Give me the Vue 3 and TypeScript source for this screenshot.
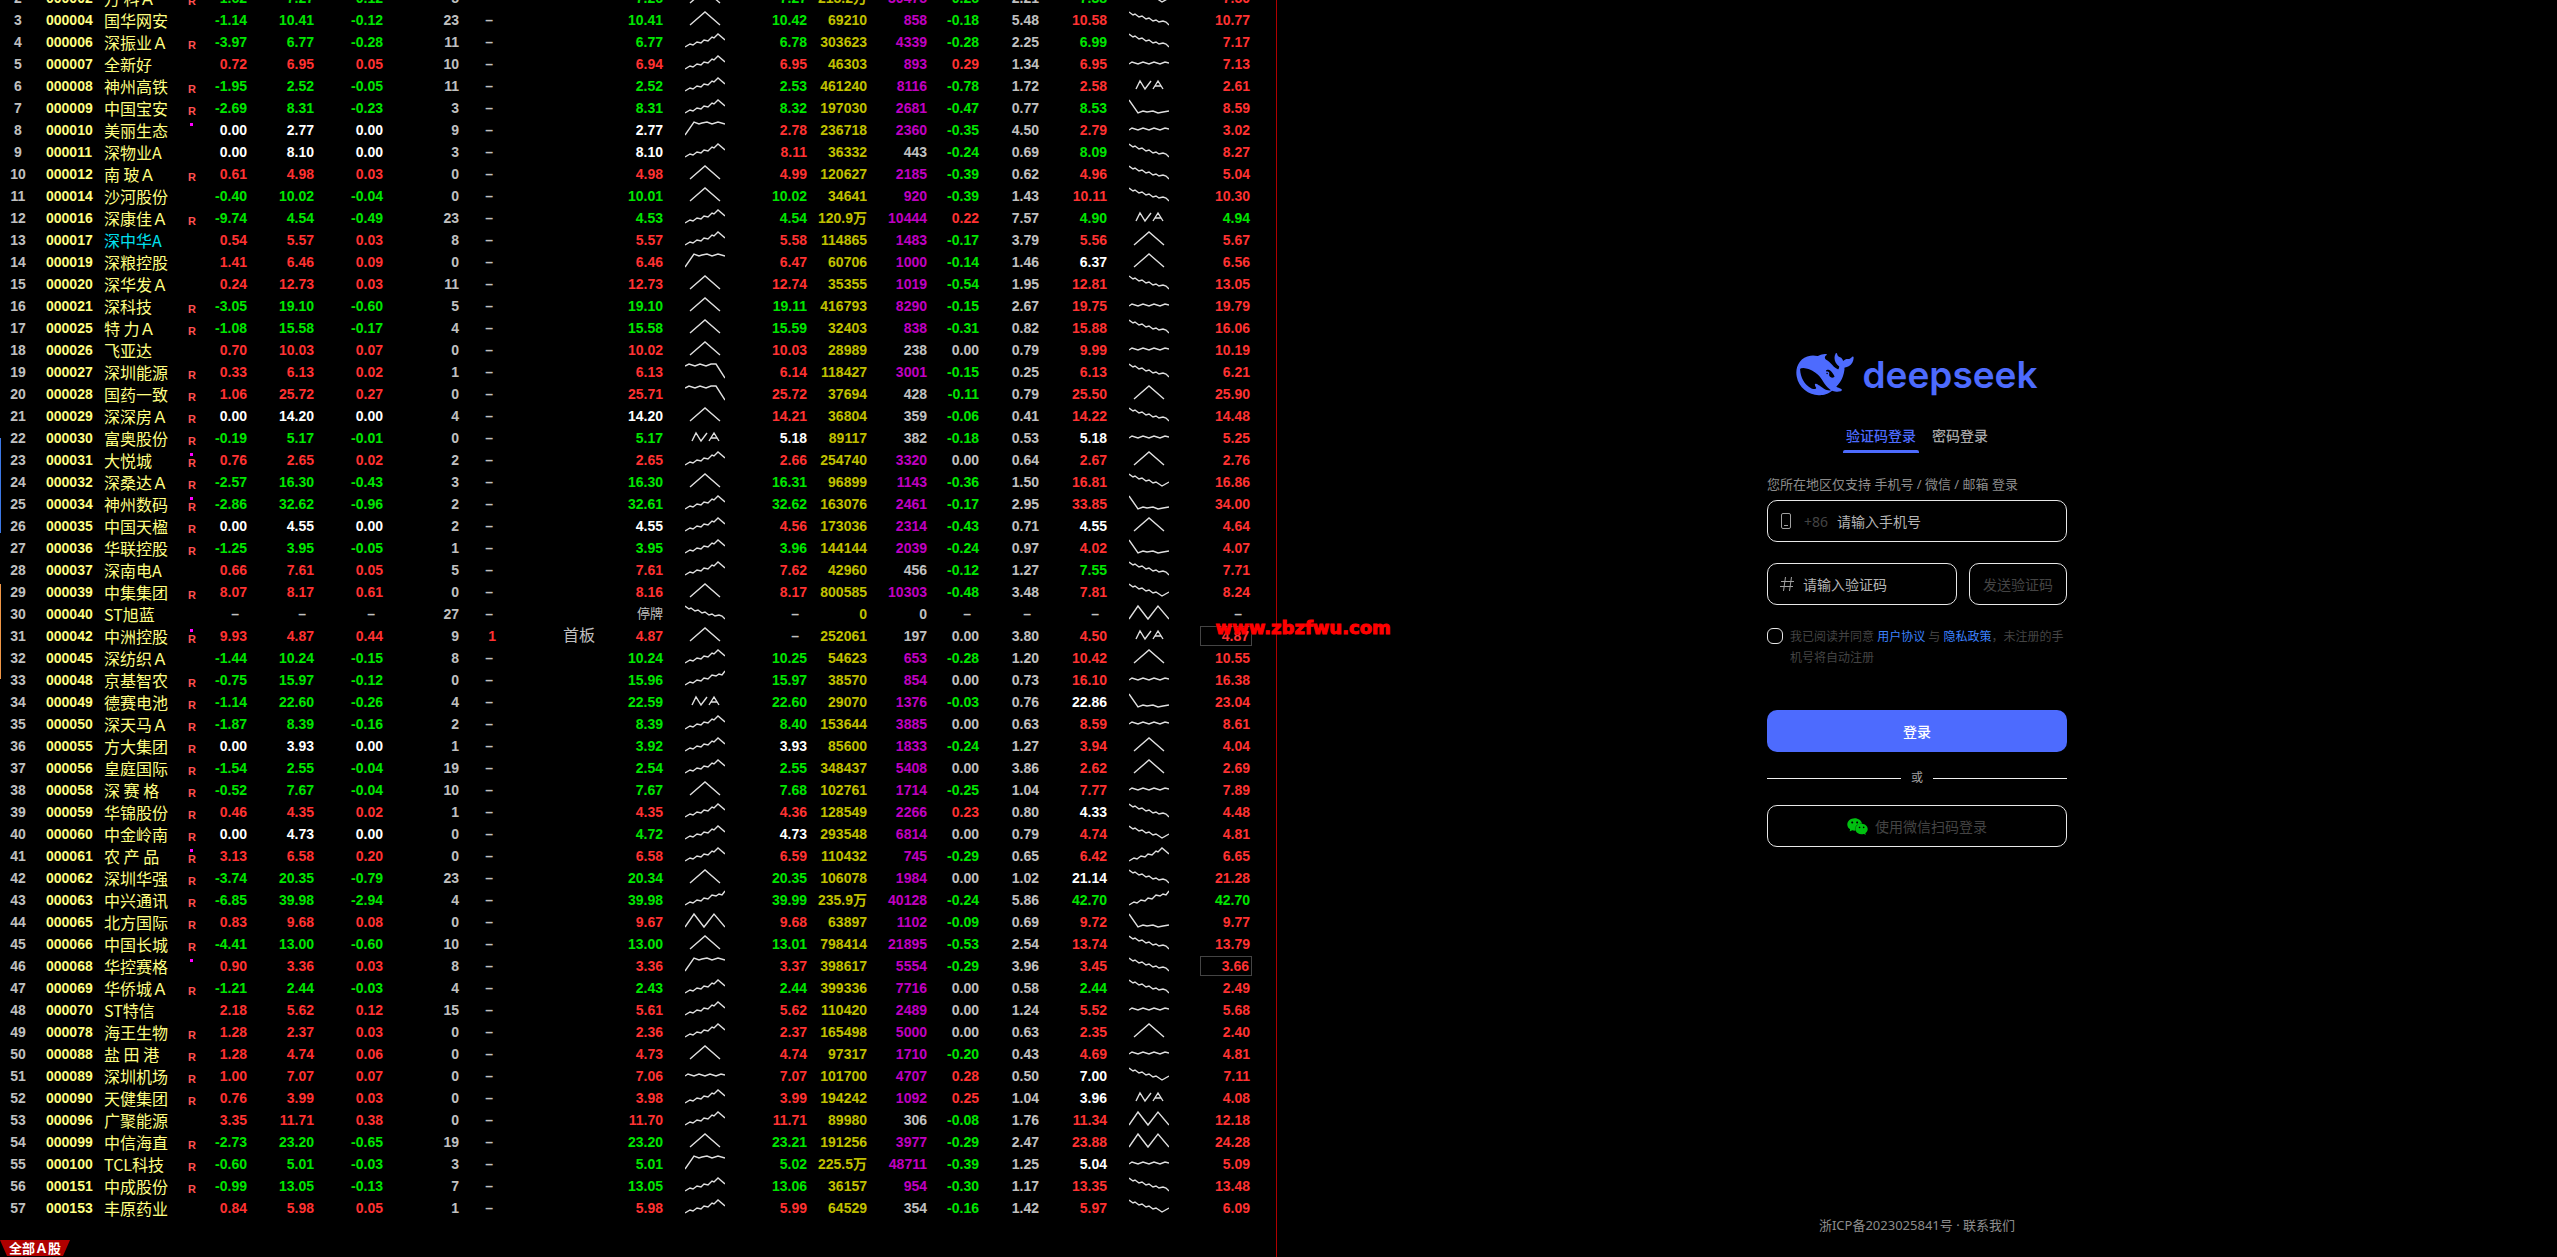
<script setup lang="ts">
import { ref } from 'vue'

type Tone = 'up' | 'down' | 'even' | 'none'

interface Quote {
  rank: number
  code: string
  name: string
  financing: boolean
  notice: boolean
  percent: string
  price: string
  change: string
  count: string
  bid: string
  bidLine: string
  ask: string
  volume: string
  lot: string
  speed: string
  turnover: string
  open: string
  openLine: string
  high: string
}

const DASH = '–'

// Outlines of the small trend drawings, on a 40 x 22 canvas
const LINES: Record<string, string> = {
  P: 'M5 16L20 3L35 16',
  U: 'M0 16L5 13L8 14L12 11L16 12L19 9L23 10L27 6L29 7L33 3L40 9',
  A: 'M0 16L5 13L8 14L12 11L16 12L19 9L23 10L27 6L31 7L34 5L37 6L40 2',
  L: 'M0 3L4 6L6 5L10 8L13 7L17 10L20 9L24 12L27 11L30 13L34 12L37 13L40 16',
  F: 'M0 11L3 9L9 11L14 9L20 11L25 9L31 11L36 9L40 10',
  N: 'M7 14L11 6L16 14L22 6M24 14L29 6L34 14M26 11H32',
  V: 'M0 3L9 16L14 14L18 15L24 14L29 16L34 15L40 14',
  J: 'M0 16L9 3L14 5L17 4L22 3L27 5L33 3L40 5',
  Q: 'M0 5L4 3L10 5L15 3L21 5L26 3L31 3L40 17',
  B: 'M0 3L4 6L6 5L10 8L13 7L17 10L20 9L24 12L27 11L33 15L40 11',
  W: 'M0 16L9 3L19 16L29 3L40 16',
}

const SOURCE = `
002|万 科Ａ|R|-1.62|7.27|-0.12|5|7.26|P|7.27|215.2万|30475|-0.26|2.21|7.38|B|7.50
004|国华网安||-1.14|10.41|-0.12|23|10.41|P|10.42|69210|858|-0.18|5.48|10.58|L|10.77
006|深振业Ａ|R|-3.97|6.77|-0.28|11|6.77|U|6.78|303623|4339|-0.28|2.25|6.99|L|7.17
007|全新好||0.72|6.95|0.05|10|6.94|U|6.95|46303|893|0.29|1.34|6.95|F|7.13
008|神州高铁|R|-1.95|2.52|-0.05|11|2.52|U|2.53|461240|8116|-0.78|1.72|2.58|N|2.61
009|中国宝安|R|-2.69|8.31|-0.23|3|8.31|U|8.32|197030|2681|-0.47|0.77|8.53|V|8.59
010|美丽生态|*|0.00|2.77|0.00|9|2.77|J|2.78|236718|2360|-0.35|4.50|2.79|F|3.02
011|深物业A||0.00|8.10|0.00|3|8.10|U|8.11|36332|443|-0.24|0.69|8.09|L|8.27
012|南 玻Ａ|R|0.61|4.98|0.03|0|4.98|P|4.99|120627|2185|-0.39|0.62|4.96|L|5.04
014|沙河股份||-0.40|10.02|-0.04|0|10.01|P|10.02|34641|920|-0.39|1.43|10.11|L|10.30
016|深康佳Ａ|R|-9.74|4.54|-0.49|23|4.53|U|4.54|120.9万|10444|0.22|7.57|4.90|N|4.94
017|深中华A||0.54|5.57|0.03|8|5.57|U|5.58|114865|1483|-0.17|3.79|5.56|P|5.67
019|深粮控股||1.41|6.46|0.09|0|6.46|J|6.47|60706|1000|-0.14|1.46|6.37|P|6.56
020|深华发Ａ||0.24|12.73|0.03|11|12.73|P|12.74|35355|1019|-0.54|1.95|12.81|L|13.05
021|深科技|R|-3.05|19.10|-0.60|5|19.10|P|19.11|416793|8290|-0.15|2.67|19.75|F|19.79
025|特 力Ａ|R|-1.08|15.58|-0.17|4|15.58|P|15.59|32403|838|-0.31|0.82|15.88|L|16.06
026|飞亚达||0.70|10.03|0.07|0|10.02|P|10.03|28989|238|0.00|0.79|9.99|F|10.19
027|深圳能源|R|0.33|6.13|0.02|1|6.13|Q|6.14|118427|3001|-0.15|0.25|6.13|L|6.21
028|国药一致|R|1.06|25.72|0.27|0|25.71|Q|25.72|37694|428|-0.11|0.79|25.50|P|25.90
029|深深房Ａ|R|0.00|14.20|0.00|4|14.20|P|14.21|36804|359|-0.06|0.41|14.22|L|14.48
030|富奥股份|R|-0.19|5.17|-0.01|0|5.17|N|5.18|89117|382|-0.18|0.53|5.18|F|5.25
031|大悦城|R*|0.76|2.65|0.02|2|2.65|U|2.66|254740|3320|0.00|0.64|2.67|P|2.76
032|深桑达Ａ|R|-2.57|16.30|-0.43|3|16.30|P|16.31|96899|1143|-0.36|1.50|16.81|B|16.86
034|神州数码|R*|-2.86|32.62|-0.96|2|32.61|U|32.62|163076|2461|-0.17|2.95|33.85|V|34.00
035|中国天楹|R|0.00|4.55|0.00|2|4.55|U|4.56|173036|2314|-0.43|0.71|4.55|P|4.64
036|华联控股|R|-1.25|3.95|-0.05|1|3.95|U|3.96|144144|2039|-0.24|0.97|4.02|V|4.07
037|深南电A||0.66|7.61|0.05|5|7.61|U|7.62|42960|456|-0.12|1.27|7.55|L|7.71
039|中集集团|R|8.07|8.17|0.61|0|8.16|P|8.17|800585|10303|-0.48|3.48|7.81|B|8.24
040|ST旭蓝||–|–|–|27|停牌|L|–|0|0|–|–|–|W|–
042|中洲控股|R*|9.93|4.87|0.44|9|4.87|P|–|252061|197|0.00|3.80|4.50|N|4.87
045|深纺织Ａ||-1.44|10.24|-0.15|8|10.24|U|10.25|54623|653|-0.28|1.20|10.42|P|10.55
048|京基智农|R|-0.75|15.97|-0.12|0|15.96|A|15.97|38570|854|0.00|0.73|16.10|F|16.38
049|德赛电池|R|-1.14|22.60|-0.26|4|22.59|N|22.60|29070|1376|-0.03|0.76|22.86|V|23.04
050|深天马Ａ|R|-1.87|8.39|-0.16|2|8.39|U|8.40|153644|3885|0.00|0.63|8.59|F|8.61
055|方大集团|R|0.00|3.93|0.00|1|3.92|U|3.93|85600|1833|-0.24|1.27|3.94|P|4.04
056|皇庭国际|R|-1.54|2.55|-0.04|19|2.54|U|2.55|348437|5408|0.00|3.86|2.62|P|2.69
058|深 赛 格|R|-0.52|7.67|-0.04|10|7.67|P|7.68|102761|1714|-0.25|1.04|7.77|F|7.89
059|华锦股份|R|0.46|4.35|0.02|1|4.35|U|4.36|128549|2266|0.23|0.80|4.33|L|4.48
060|中金岭南|R|0.00|4.73|0.00|0|4.72|U|4.73|293548|6814|0.00|0.79|4.74|B|4.81
061|农 产 品|R*|3.13|6.58|0.20|0|6.58|U|6.59|110432|745|-0.29|0.65|6.42|U|6.65
062|深圳华强|R|-3.74|20.35|-0.79|23|20.34|P|20.35|106078|1984|0.00|1.02|21.14|L|21.28
063|中兴通讯|R|-6.85|39.98|-2.94|4|39.98|A|39.99|235.9万|40128|-0.24|5.86|42.70|A|42.70
065|北方国际|R|0.83|9.68|0.08|0|9.67|W|9.68|63897|1102|-0.09|0.69|9.72|V|9.77
066|中国长城|R|-4.41|13.00|-0.60|10|13.00|P|13.01|798414|21895|-0.53|2.54|13.74|L|13.79
068|华控赛格|*|0.90|3.36|0.03|8|3.36|J|3.37|398617|5554|-0.29|3.96|3.45|L|3.66
069|华侨城Ａ|R|-1.21|2.44|-0.03|4|2.43|U|2.44|399336|7716|0.00|0.58|2.44|L|2.49
070|ST特信||2.18|5.62|0.12|15|5.61|U|5.62|110420|2489|0.00|1.24|5.52|F|5.68
078|海王生物|R|1.28|2.37|0.03|0|2.36|U|2.37|165498|5000|0.00|0.63|2.35|P|2.40
088|盐 田 港|R|1.28|4.74|0.06|0|4.73|P|4.74|97317|1710|-0.20|0.43|4.69|F|4.81
089|深圳机场|R|1.00|7.07|0.07|0|7.06|F|7.07|101700|4707|0.28|0.50|7.00|B|7.11
090|天健集团|R|0.76|3.99|0.03|0|3.98|U|3.99|194242|1092|0.25|1.04|3.96|N|4.08
096|广聚能源||3.35|11.71|0.38|0|11.70|U|11.71|89980|306|-0.08|1.76|11.34|W|12.18
099|中信海直|R|-2.73|23.20|-0.65|19|23.20|P|23.21|191256|3977|-0.29|2.47|23.88|W|24.28
100|TCL科技|R|-0.60|5.01|-0.03|3|5.01|J|5.02|225.5万|48711|-0.39|1.25|5.04|F|5.09
151|中成股份|R|-0.99|13.05|-0.13|7|13.05|U|13.06|36157|954|-0.30|1.17|13.35|L|13.48
153|丰原药业||0.84|5.98|0.05|1|5.98|U|5.99|64529|354|-0.16|1.42|5.97|B|6.09
`

const quotes: Quote[] = SOURCE.trim()
  .split('\n')
  .map((line, index) => {
    const f = line.split('|')
    return {
      rank: index + 2,
      code: '000' + f[0],
      name: f[1],
      financing: f[2].includes('R'),
      notice: f[2].includes('*'),
      percent: f[3],
      price: f[4],
      change: f[5],
      count: f[6],
      bid: f[7],
      bidLine: f[8],
      ask: f[9],
      volume: f[10],
      lot: f[11],
      speed: f[12],
      turnover: f[13],
      open: f[14],
      openLine: f[15],
      high: f[16],
    }
  })

const streaks: Record<string, { days: string; label: string }> = {
  '000042': { days: '1', label: '首板' },
}
const boxed = new Set(['000042', '000068'])
const watched = new Set(['000017'])

function sign(value: number): Tone {
  if (Number.isNaN(value)) return 'none'
  if (value === 0) return 'even'
  return value > 0 ? 'up' : 'down'
}

// A price is coloured by where it stands against the previous close
function tone(q: Quote, value: string): Tone {
  const cents = Math.round(Number(value) * 100)
  const close = Math.round(Number(q.price) * 100) - Math.round(Number(q.change) * 100)
  return sign(cents - close)
}

function speedTone(q: Quote): Tone {
  const t = sign(Number(q.speed))
  return t === 'even' ? 'none' : t
}

const columns = [36, 68, 84, 12, 47, 67, 69, 76, 37, 99, 68, 62, 82, 60, 60, 52, 60, 68, 62, 83, 24]

const phone = ref('')
const code = ref('')
const agreed = ref(false)
</script>

<template>
  <div class="desk">
    <section class="market">
      <i class="edge edge-blue"></i>
      <i class="edge edge-orange"></i>
      <div class="board">
        <table class="quotes">
          <colgroup>
            <col v-for="(w, i) in columns" :key="i" :style="{ width: w + 'px' }" />
          </colgroup>
          <tbody>
            <tr v-for="q in quotes" :key="q.code">
              <td class="rank">{{ q.rank }}</td>
              <td class="code">{{ q.code }}</td>
              <td class="name" :class="{ watched: watched.has(q.code) }">{{ q.name }}</td>
              <td class="marks"><i v-if="q.notice" class="notice"></i><span v-if="q.financing">R</span></td>
              <td :class="[sign(Number(q.percent)), { dash: q.percent === DASH }]">{{ q.percent }}</td>
              <td :class="[sign(Number(q.change)), { dash: q.price === DASH }]">{{ q.price }}</td>
              <td :class="[sign(Number(q.change)), { dash: q.change === DASH }]">{{ q.change }}</td>
              <td>{{ q.count }}</td>
              <td v-if="streaks[q.code]" class="up">{{ streaks[q.code].days }}</td>
              <td v-else class="streak">{{ DASH }}</td>
              <td class="label">{{ streaks[q.code]?.label }}</td>
              <td :class="[tone(q, q.bid), { halted: q.bid === '停牌' }]">{{ q.bid }}</td>
              <td class="line"><svg width="40" height="22" viewBox="0 0 40 22"><path :d="LINES[q.bidLine]" /></svg></td>
              <td :class="[tone(q, q.ask), { dash: q.ask === DASH }]">{{ q.ask }}</td>
              <td class="volume">{{ q.volume }}</td>
              <td :class="{ large: Number(q.lot) >= 500 }">{{ q.lot }}</td>
              <td :class="[speedTone(q), { dash: q.speed === DASH }]">{{ q.speed }}</td>
              <td :class="{ dash: q.turnover === DASH }">{{ q.turnover }}</td>
              <td :class="[tone(q, q.open), { dash: q.open === DASH }]">{{ q.open }}</td>
              <td class="line"><svg width="40" height="22" viewBox="0 0 40 22"><path :d="LINES[q.openLine]" /></svg></td>
              <td class="high" :class="[tone(q, q.high), { dash: q.high === DASH }]">
                <span :class="{ boxed: boxed.has(q.code) }">{{ q.high }}</span>
              </td>
              <td></td>
            </tr>
          </tbody>
        </table>
      </div>
      <button type="button" class="sheet">全部Ａ股</button>
    </section>

    <section class="account">
      <form class="form" @submit.prevent>
        <div class="logo">
          <svg class="whale" viewBox="0 3 24 18" width="58" height="43" aria-hidden="true">
            <path d="M23.748 4.482c-.254-.124-.364.113-.512.234-.051.039-.094.09-.137.136-.372.397-.806.657-1.373.626-.829-.046-1.537.214-2.163.848-.133-.782-.575-1.248-1.247-1.548-.352-.156-.708-.311-.955-.65-.172-.241-.219-.51-.305-.774-.055-.16-.11-.323-.293-.35-.2-.031-.278.136-.356.276-.313.572-.434 1.202-.422 1.84.027 1.436.633 2.58 1.838 3.393.137.093.172.187.129.323-.082.28-.18.552-.266.833-.055.179-.137.217-.329.14a5.526 5.526 0 01-1.736-1.18c-.857-.828-1.631-1.742-2.597-2.458a11.365 11.365 0 00-.689-.471c-.985-.957.13-1.743.388-1.836.27-.098.093-.432-.779-.428-.872.004-1.67.295-2.687.684a3.055 3.055 0 01-.465.137 9.597 9.597 0 00-2.883-.102c-1.885.21-3.39 1.102-4.497 2.623C.082 8.606-.231 10.684.152 12.85c.403 2.284 1.569 4.175 3.36 5.653 1.858 1.533 3.997 2.284 6.438 2.14 1.482-.085 3.133-.284 4.994-1.86.47.234.962.327 1.78.397.63.059 1.236-.03 1.705-.128.735-.156.684-.837.419-.961-2.155-1.004-1.682-.595-2.113-.926 1.096-1.296 2.746-2.642 3.392-7.003.05-.347.007-.565 0-.845-.004-.17.035-.237.23-.256a4.173 4.173 0 001.545-.475c1.396-.763 1.96-2.015 2.093-3.517.02-.23-.004-.467-.247-.588zM11.581 18c-2.089-1.642-3.102-2.183-3.52-2.16-.392.024-.321.471-.235.763.09.288.207.486.371.739.114.167.192.416-.113.603-.673.416-1.842-.14-1.897-.167-1.361-.802-2.5-1.86-3.301-3.307-.774-1.393-1.224-2.887-1.298-4.482-.02-.386.093-.522.477-.592a4.696 4.696 0 011.529-.039c2.132.312 3.946 1.265 5.468 2.774.868.86 1.525 1.887 2.202 2.891.72 1.066 1.494 2.082 2.48 2.914.348.292.625.514.891.677-.802.09-2.14.11-3.054-.614zm1-6.44a.306.306 0 01.415-.287.302.302 0 01.2.288.306.306 0 01-.31.307.303.303 0 01-.304-.308zm3.11 1.596c-.2.081-.399.151-.59.16a1.245 1.245 0 01-.798-.254c-.274-.23-.47-.358-.552-.758a1.73 1.73 0 01.016-.588c.07-.327-.008-.537-.239-.727-.187-.156-.426-.199-.688-.199a.559.559 0 01-.254-.078c-.11-.054-.2-.19-.114-.358.028-.054.16-.186.192-.21.356-.202.767-.136 1.146.016.352.144.618.408 1.001.782.391.451.462.576.685.914.176.265.336.537.445.848.067.195-.019.354-.25.452z" />
          </svg>
          <span class="wordmark">deepseek</span>
        </div>

        <div class="tabs">
          <button type="button" class="tab active">验证码登录</button>
          <button type="button" class="tab">密码登录</button>
        </div>

        <p class="hint">您所在地区仅支持 手机号 / 微信 / 邮箱 登录</p>

        <label class="field">
          <svg class="phone" viewBox="0 0 10 16" width="10" height="16" aria-hidden="true">
            <rect x="0.5" y="0.5" width="9" height="15" rx="1.5" />
            <path d="M3 12.5H7" />
          </svg>
          <span class="prefix">+86</span>
          <input v-model="phone" type="tel" placeholder="请输入手机号" />
        </label>

        <div class="verify">
          <label class="field">
            <svg class="hash" viewBox="0 0 16 16" width="16" height="16" aria-hidden="true">
              <path d="M6.5 1L4.5 15M12.5 1L10.5 15M2 5.5H15M1 10.5H14" />
            </svg>
            <input v-model="code" type="text" placeholder="请输入验证码" />
          </label>
          <button type="button" class="outline send">发送验证码</button>
        </div>

        <div class="agree">
          <input id="agree" v-model="agreed" type="checkbox" />
          <label for="agree">我已阅读并同意 <a href="#terms">用户协议</a> 与 <a href="#privacy">隐私政策</a>，未注册的手机号将自动注册</label>
        </div>

        <button type="submit" class="submit">登录</button>

        <div class="or"><span>或</span></div>

        <button type="button" class="outline wechat">
          <svg viewBox="0 2 24 20" width="21" height="17" aria-hidden="true">
            <path d="M8.691 2.188C3.891 2.188 0 5.476 0 9.53c0 2.212 1.17 4.203 3.002 5.55a.59.59 0 0 1 .213.665l-.39 1.48c-.019.07-.048.141-.048.213 0 .163.13.295.29.295a.326.326 0 0 0 .167-.054l1.903-1.114a.864.864 0 0 1 .717-.098 10.16 10.16 0 0 0 2.837.403c.276 0 .543-.027.811-.05-.857-2.578.157-4.972 1.932-6.446 1.703-1.415 3.882-1.98 5.853-1.838-.576-3.583-4.196-6.348-8.596-6.348zM5.785 5.991c.642 0 1.162.529 1.162 1.18a1.17 1.17 0 0 1-1.162 1.178A1.17 1.17 0 0 1 4.623 7.17c0-.651.52-1.18 1.162-1.18zm5.813 0c.642 0 1.162.529 1.162 1.18a1.17 1.17 0 0 1-1.162 1.178 1.17 1.17 0 0 1-1.162-1.178c0-.651.52-1.18 1.162-1.18zm5.34 2.867c-1.797-.052-3.746.512-5.28 1.786-1.72 1.428-2.687 3.72-1.78 6.22.942 2.453 3.666 4.229 6.884 4.229.826 0 1.622-.12 2.361-.336a.722.722 0 0 1 .598.082l1.584.926a.272.272 0 0 0 .14.047c.134 0 .24-.111.24-.247 0-.06-.023-.12-.038-.177l-.327-1.233a.582.582 0 0 1-.023-.156.49.49 0 0 1 .201-.398C23.024 18.48 24 16.82 24 14.98c0-3.21-2.931-5.837-6.656-6.088V8.89c-.135-.01-.27-.027-.407-.03zm-2.53 3.274c.535 0 .969.44.969.982a.976.976 0 0 1-.969.983.976.976 0 0 1-.969-.983c0-.542.434-.982.97-.982zm4.844 0c.535 0 .969.44.969.982a.976.976 0 0 1-.969.983.976.976 0 0 1-.969-.983c0-.542.434-.982.969-.982z" />
          </svg>
          使用微信扫码登录
        </button>
      </form>

      <footer class="footer">
        <a href="#icp">浙ICP备2023025841号</a> · <a href="#contact">联系我们</a>
      </footer>
    </section>

    <span class="watermark">www.zbzfwu.com</span>
  </div>
</template>

<style>
html,
body {
  background: #000;
}
</style>

<style scoped>
.desk {
  position: relative;
  display: flex;
  min-height: 100vh;
  overflow: hidden;
  background: #000;
  font-family: "Noto Sans", "Noto Sans CJK SC", sans-serif;
}

.desk * {
  box-sizing: border-box;
}

/* Quote board */
.market {
  position: relative;
  display: flex;
  flex-direction: column;
  justify-content: space-between;
  flex: 0 0 calc(50% - 2px);
  border-right: 1px solid #b00000;
}

.board {
  overflow: hidden;
}

.quotes {
  width: 100%;
  margin-top: -13px;
  border-collapse: collapse;
  table-layout: fixed;
  color: #c0c0c0;
  font-family: "Liberation Sans", "Noto Sans CJK SC", sans-serif;
  font-size: 14px;
  font-weight: 700;
}

.quotes td {
  height: 22px;
  padding: 0;
  line-height: 22px;
  text-align: right;
  white-space: nowrap;
}

.quotes .rank {
  text-align: center;
}

.quotes .code {
  padding-left: 10px;
  color: #ffff80;
  text-align: left;
}

.quotes .name {
  color: #ffff80;
  font-family: "Noto Sans CJK SC", sans-serif;
  font-size: 16px;
  font-weight: 400;
  text-align: left;
}

.quotes .name.watched {
  color: #00e0f0;
}

.quotes .marks {
  position: relative;
  padding-top: 6px;
  color: #ff5050;
  font-size: 11px;
  line-height: 16px;
  text-align: left;
}

.notice {
  position: absolute;
  top: 4px;
  left: 2px;
  width: 3px;
  height: 3px;
  background: #f0f;
}

.quotes .up {
  color: #ff3232;
}

.quotes .down {
  color: #00e600;
}

.quotes .even {
  color: #fff;
}

.quotes .volume {
  color: #c0c000;
}

.quotes .large {
  color: #c000c0;
}

.quotes .dash {
  padding-right: 8px;
  color: #c0c0c0;
}

.quotes .streak {
  padding-right: 3px;
}

.quotes .label {
  font-size: 16px;
  font-weight: 400;
}

.quotes .halted {
  font-size: 13px;
  font-weight: 400;
}

.quotes .line {
  line-height: 0;
}

.line svg {
  fill: none;
  stroke: #e0e0e0;
  stroke-width: 1.4;
}

.quotes .high {
  padding-right: 2px;
}

.quotes .high.dash {
  padding-right: 10px;
}

.boxed {
  display: block;
  width: 52px;
  height: 20px;
  margin-right: -2px;
  margin-left: auto;
  padding-right: 2px;
  border: 1px solid #444;
  line-height: 18px;
}

.edge {
  position: absolute;
  left: 0;
  width: 1px;
  height: 95px;
}

.edge-blue {
  top: 438px;
  background: #3c78e6;
}

.edge-orange {
  top: 584px;
  background: #f09646;
}

.sheet {
  align-self: flex-start;
  width: 70px;
  height: 16px;
  margin-bottom: 1px;
  padding: 0;
  border: 0;
  background: #b00000;
  clip-path: polygon(0 0, 100% 0, 90% 100%, 10% 100%);
  color: #fff;
  font-family: "Noto Sans CJK SC", sans-serif;
  font-size: 13px;
  font-weight: 700;
  line-height: 16px;
}

/* Sign-in side */
.account {
  display: flex;
  flex: 1;
  flex-direction: column;
  align-items: center;
}

.form {
  display: flex;
  flex: 1;
  flex-direction: column;
  justify-content: center;
  width: 300px;
}

.logo {
  display: flex;
  align-items: center;
  justify-content: center;
  gap: 8px;
  height: 43px;
  color: #4d6bfe;
}

.whale {
  flex: none;
  fill: #4d6bfe;
}

.wordmark {
  font-family: Inter, sans-serif;
  font-size: 37px;
  font-weight: 600;
  line-height: 43px;
}

.tabs {
  display: flex;
  justify-content: center;
  gap: 10px;
  margin-top: 26px;
}

.tab {
  height: 31px;
  padding: 0 3px;
  border: 0;
  background: none;
  color: #a8a8a8;
  font-family: inherit;
  font-size: 14px;
  font-weight: 500;
  line-height: 28px;
}

.tab::after {
  display: block;
  height: 3px;
  margin: 0 -3px;
  border-radius: 2px 2px 0 0;
  content: "";
}

.tab.active {
  color: #4d6bfe;
}

.tab.active::after {
  background: #4d6bfe;
}

.hint {
  margin: 21px 0 6px;
  color: #8c8c8c;
  font-size: 13px;
  line-height: 20px;
}

.field {
  display: flex;
  flex: 1;
  align-items: center;
  height: 42px;
  min-height: 42px;
  padding: 0 12px;
  border: 1px solid #e8e8e8;
  border-radius: 10px;
}

.form > .field {
  flex: none;
}

.field svg {
  flex: none;
  fill: none;
  stroke: #a0a0a0;
}

.phone {
  margin: 0 13px 0 1px;
}

.hash {
  margin: 0 8px 0 -1px;
}

.prefix {
  margin-right: 9px;
  color: #444;
  font-size: 14px;
}

.field input {
  flex: 1;
  width: 0;
  padding: 0;
  border: 0;
  outline: 0;
  background: none;
  color: #fff;
  font-family: inherit;
  font-size: 14px;
}

.field input::placeholder {
  color: #b4b4b4;
  opacity: 1;
}

.verify {
  display: flex;
  gap: 12px;
  margin-top: 21px;
}

.outline {
  height: 42px;
  padding: 0;
  border: 1px solid #e8e8e8;
  border-radius: 10px;
  background: none;
  color: #444;
  font-family: inherit;
  font-size: 14px;
}

.send {
  width: 98px;
}

.agree {
  display: flex;
  gap: 7px;
  margin-top: 21px;
  color: #444;
  font-size: 12px;
  line-height: 21px;
}

.agree input {
  flex: none;
  width: 16px;
  height: 16px;
  margin: 2px 0 0;
  border: 1px solid #e8e8e8;
  border-radius: 6px;
  appearance: none;
}

.agree a {
  color: #3c82ff;
  text-decoration: none;
}

.submit {
  height: 42px;
  margin-top: 42px;
  border: 0;
  border-radius: 10px;
  background: #4d6bfe;
  color: #fff;
  font-family: inherit;
  font-size: 14px;
  font-weight: 500;
}

.or {
  display: flex;
  align-items: center;
  gap: 10px;
  margin: 16px 0 17px;
  color: #a0a0a0;
  font-size: 12px;
  line-height: 20px;
}

.or::before,
.or::after {
  flex: 1;
  height: 1px;
  background: #f0f0f0;
  content: "";
}

.wechat {
  display: flex;
  align-items: center;
  justify-content: center;
  gap: 7px;
}

.wechat svg {
  fill: #00c010;
}

.footer {
  height: 57px;
  padding-top: 15px;
  color: #8c8c8c;
  font-size: 13px;
  line-height: 20px;
}

.footer a {
  color: inherit;
  text-decoration: none;
}

.watermark {
  position: absolute;
  top: 618px;
  left: calc(50% - 63px);
  color: #f00;
  font-family: "DejaVu Sans", sans-serif;
  font-size: 18px;
  font-weight: 700;
  line-height: 20px;
  -webkit-text-stroke: 1px #f00;
}
</style>
